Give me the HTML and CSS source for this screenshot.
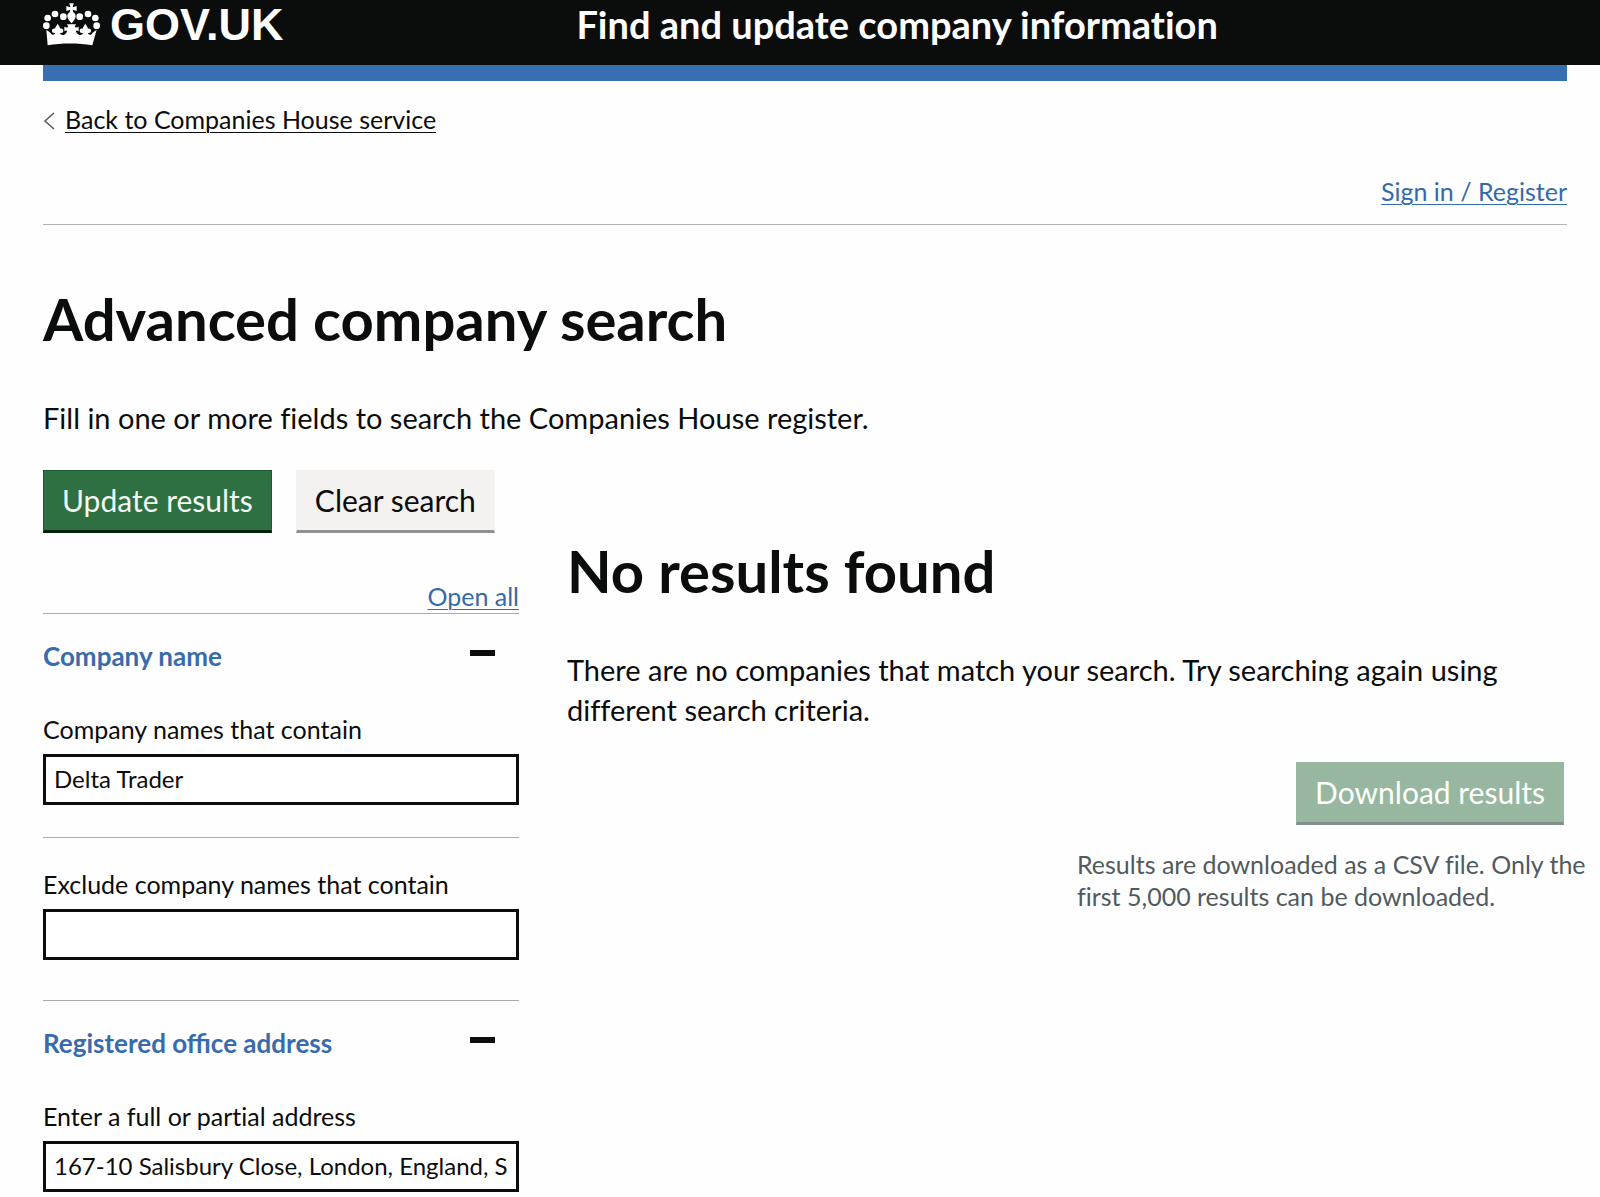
FILE: index.html
```html
<!DOCTYPE html>
<html lang="en">
<head>
    <meta charset="UTF-8">
    <meta name="viewport" content="width=device-width, initial-scale=1.0">
    <title>Advanced company search - Find and update company information - GOV.UK</title>
    <link rel="stylesheet" href="styles.css">
</head>
<body>
    <header class="header">
        <div class="container header-row">
            <a href="#" class="logo">
                <svg class="crown" viewBox="0 0 171 129" aria-hidden="true">
                    <g fill="#fff">
                        <path d="M79 1h13l-3 12 12-4v15l-12-4 2 8c5 3 7 7 7 12 0 8-6 13-12 21-7-8-13-13-13-21 0-5 2-9 7-12l2-8-12 4V9l12 4z"/>
                        <circle cx="61" cy="41" r="10"/>
                        <circle cx="110" cy="41" r="10"/>
                        <circle cx="36" cy="33" r="10"/>
                        <circle cx="135" cy="33" r="10"/>
                        <circle cx="14" cy="45" r="10"/>
                        <circle cx="157" cy="45" r="10"/>
                        <circle cx="10" cy="68" r="10"/>
                        <circle cx="161" cy="68" r="10"/>
                        <path d="M10 80l12 9c3 6 8 8 13 4l2-4c-5 2-10 0-10-6 0-5 4-7 9-6 1-5 4-9 8-15 4 6 7 10 8 15 5-1 9 1 9 6 0 6-5 8-10 6 1 8 13 10 19 0l3-5c-3-3-6-2-9 1V71c4 3 8 3 12 1l-4-8h27l-4 8c4 2 8 2 12-1v14c-3-3-6-4-9-1l3 5c6 10 18 8 19 0-5 2-10 0-10-6 0-5 4-7 9-6 1-5 4-9 8-15 4 6 7 10 8 15 5-1 9 1 9 6 0 6-5 8-10 6l2 4c5 4 10 2 13-4l12-9-13 47c-42-7-92-7-134 0z"/>
                    </g>
                </svg>
                <span>GOV.UK</span>
            </a>
            <a href="#" class="service-name">Find and update company information</a>
        </div>
    </header>

    <div class="container">
        <div class="blue-bar"></div>
        <a href="#" class="back-link">
            <svg class="chevron" viewBox="0 0 12 20" aria-hidden="true">
                <path d="M11 2L2 10l9 8" fill="none" stroke="#505a5f" stroke-width="1.5"/>
            </svg>
            <span>Back to Companies House service</span>
        </a>
        <nav class="user-nav">
            <a href="#" class="link">Sign in / Register</a>
        </nav>

        <main>
            <h1 class="heading">Advanced company search</h1>
            <p class="body-text">Fill in one or more fields to search the Companies House register.</p>
            <div class="buttons">
                <button type="submit" form="search" class="button">Update results</button>
                <button type="reset" form="search" class="button button-grey">Clear search</button>
            </div>

            <div class="row">
                <form id="search" class="filters">
                    <div class="open-all">
                        <a href="#" class="link">Open all</a>
                    </div>

                    <section class="section">
                        <h2 class="section-heading">
                            <button type="button" class="section-button" aria-expanded="true">
                                Company name
                                <span class="minus"></span>
                            </button>
                        </h2>
                        <div class="field">
                            <label for="include">Company names that contain</label>
                            <input type="text" id="include" class="input" value="Delta Trader">
                        </div>
                        <div class="field field-divided">
                            <label for="exclude">Exclude company names that contain</label>
                            <input type="text" id="exclude" class="input">
                        </div>
                    </section>

                    <section class="section">
                        <h2 class="section-heading">
                            <button type="button" class="section-button" aria-expanded="true">
                                Registered office address
                                <span class="minus"></span>
                            </button>
                        </h2>
                        <div class="field">
                            <label for="address">Enter a full or partial address</label>
                            <input type="text" id="address" class="input" value="167-10 Salisbury Close, London, England, S">
                        </div>
                    </section>
                </form>

                <div class="results">
                    <h2 class="heading">No results found</h2>
                    <p class="body-text">There are no companies that match your search. Try searching again using different search criteria.</p>
                    <div class="download">
                        <button type="button" class="button button-disabled" disabled>Download results</button>
                        <p class="hint">Results are downloaded as a CSV file. Only the first 5,000 results can be downloaded.</p>
                    </div>
                </div>
            </div>
        </main>
    </div>
</body>
</html>
```
FILE: styles.css
```css
* {
    box-sizing: border-box;
}
body {
    margin: 0;
    background-color: #fefefe;
    color: #0b0c0c;
    font-family: Lato, "Liberation Sans", sans-serif;
    font-size: 25px;
    line-height: 32px;
    font-variant-ligatures: none;
}
.container {
    padding: 0 33px 0 43px;
}

/* header */
.header {
    background-color: #0b0c0c;
    padding-bottom: 15px;
}
.header-row {
    display: flex;
    align-items: center;
}
.header a {
    color: #fff;
    font-weight: 700;
    line-height: 50px;
    text-decoration: none;
}
.logo {
    display: flex;
    align-items: center;
    gap: 10px;
    flex: 0 0 35%;
    font-family: "Liberation Sans", sans-serif;
    font-size: 45px;
}
.crown {
    width: 57px;
    height: 43px;
    margin-bottom: 2px;
}
.header .service-name {
    font-size: 38px;
    line-height: 46px;
    padding-bottom: 3px;
}
.blue-bar {
    height: 16px;
    background-color: #386fb3;
}

/* links */
.link {
    color: #346aaa;
    text-decoration: underline;
    text-decoration-thickness: 1px;
    text-underline-offset: 3px;
}
.back-link {
    display: flex;
    align-items: center;
    gap: 10px;
    margin-top: 22px;
    color: #0b0c0c;
    text-decoration: none;
}
.back-link span {
    text-decoration: underline;
    text-decoration-thickness: 1px;
    text-underline-offset: 3px;
}
.chevron {
    width: 12px;
    height: 20px;
    margin-top: 4px;
}
.user-nav {
    margin-top: 40px;
    padding-bottom: 17px;
    border-bottom: 1px solid #b1b4b6;
    text-align: right;
}

/* text */
.heading {
    margin: 62px 0 47px;
    font-size: 58px;
    line-height: 64px;
    font-weight: 700;
}
.body-text {
    margin: 0 0 32px;
    font-size: 29px;
    line-height: 40px;
}

/* buttons */
.buttons {
    display: flex;
    gap: 24px;
}
.button {
    padding: 9px 18px 10px;
    border: 1px solid #1d5a30;
    border-bottom: 3px solid #00200d;
    border-radius: 0;
    background-color: #2e7041;
    color: #f3f8f5;
    font-family: inherit;
    font-size: 30px;
    line-height: 40px;
}
.button-grey {
    border-color: #f3f2f1;
    border-bottom-color: #929191;
    background-color: #f3f2f1;
    color: #0b0c0c;
}
.button-disabled {
    border-color: #98b7a1;
    border-bottom-color: #80908a;
    background-color: #98b7a1;
    color: #fff;
}

/* two columns */
.row {
    display: flex;
    margin: 0 -24px;
}
.filters {
    width: 33.333%;
    padding: 0 24px;
}
.results {
    width: 66.667%;
    padding: 0 24px;
}
.results .heading {
    margin-top: 6px;
}

/* filters */
.open-all {
    margin-top: 47px;
    padding-bottom: 1px;
    text-align: right;
}
.section {
    padding-top: 26px;
    padding-bottom: 40px;
    border-top: 1px solid #a9abac;
}
.section:last-child {
    padding-bottom: 4px;
}
.section-heading {
    margin: 0 0 41px;
    font-size: 26px;
}
.section-button {
    display: flex;
    justify-content: space-between;
    width: 100%;
    padding: 0 24px 0 0;
    border: 0;
    background: none;
    color: #386bab;
    font-family: inherit;
    font-size: 26px;
    font-weight: 700;
    line-height: 32px;
}
.minus {
    width: 25px;
    height: 6px;
    margin-top: 10px;
    background-color: #0b0c0c;
}
.field label {
    display: block;
    margin-bottom: 9px;
}
.field-divided {
    margin-top: 32px;
    padding-top: 30px;
    border-top: 1px solid #a9abac;
}
.input {
    display: block;
    width: 100%;
    height: 51px;
    padding: 0 8px 3px;
    border: 3px solid #0b0c0c;
    border-radius: 0;
    background-color: #fff;
    color: #0b0c0c;
    font-family: inherit;
    font-size: 24px;
}

/* download */
.download {
    display: flex;
    flex-direction: column;
    margin-left: 51%;
    margin-right: -24px;
}
.download .button {
    align-self: flex-end;
    margin-right: 27px;
}
.hint {
    margin: 23px 0 0;
    color: #505a5f;
}
```
